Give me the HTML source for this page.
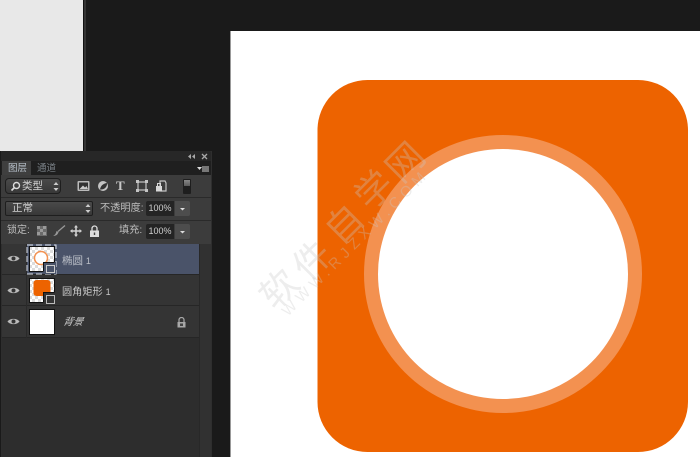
<!DOCTYPE html>
<html><head><meta charset="utf-8">
<style>
html,body{margin:0;padding:0;background:#1a1a1a}
#r{position:relative;width:700px;height:457px;overflow:hidden;background:#1a1a1a;font-family:"Liberation Sans","Noto Sans CJK SC",sans-serif}
#r div,#r svg,#r span{position:absolute}
.t{color:#c4c4c4;font-size:10px;line-height:12px;white-space:nowrap}
.box{box-sizing:border-box;border:1px solid #1e1e1e;border-radius:3px;background:linear-gradient(#4a4a4a,#383838)}
.val{background:#242424;border-radius:2px 0 0 2px;color:#d0d0d0;font-size:9px;line-height:14px;text-align:center;white-space:nowrap}
.arr{background:#4d4d4d;border-radius:0 2px 2px 0}
.wm{width:50px;height:50px;line-height:50px;text-align:center;font-size:37px;color:rgba(200,200,200,.32);transform:rotate(-45deg);font-family:"Noto Sans CJK SC",sans-serif}
</style></head><body>
<div id="r">
<div style="left:0;top:0;width:83px;height:151px;background:#e8e8e8"></div>
<div style="left:83px;top:0;width:1px;height:151px;background:#111"></div>
<div style="left:84px;top:0;width:2px;height:151px;background:#333"></div>
<div style="left:231px;top:31px;width:469px;height:426px;background:#fff;box-shadow:-1px 0 0 #999"></div>
<svg style="left:0;top:0" width="700" height="457" viewBox="0 0 700 457">
<rect x="317.500" y="80" width="370.500" height="372" rx="50" fill="#ed6300"/>
<circle cx="503" cy="274" r="139" fill="#f39150"/>
<circle cx="503" cy="274" r="125" fill="#fff"/>
</svg>
<div class="wm" style="left:252px;top:262px">软</div>
<div class="wm" style="left:285px;top:233px">件</div>
<div class="wm" style="left:317px;top:197px">自</div>
<div class="wm" style="left:347px;top:163px">学</div>
<div class="wm" style="left:378px;top:135px">网</div>
<div style="left:246px;top:234px;width:220px;height:18px;line-height:18px;text-align:center;font-size:15px;letter-spacing:5px;color:rgba(200,200,200,.32);transform:rotate(-45deg);white-space:nowrap">WWW.RJZXW.COM</div>

<div style="left:1px;top:151px;width:211px;height:306px;background:#2e2e2e"></div>
<div style="left:1px;top:151px;width:210px;height:10px;background:#272727;border-radius:2px 2px 0 0"></div>
<div style="left:1px;top:161px;width:210px;height:14px;background:#1f1f1f"></div>
<div style="left:2px;top:161px;width:29px;height:14px;background:#3f3f3f"></div>
<div class="t" style="left:8px;top:162.500px;color:#b9c2cc;font-size:9.500px">图层</div>
<div class="t" style="left:37px;top:162.500px;color:#7b8288;font-size:9.500px">通道</div>
<div style="left:1px;top:175px;width:210px;height:22px;background:#3c3c3c;border-bottom:1px solid #2a2a2a"></div>
<div style="left:1px;top:198px;width:210px;height:22px;background:#3c3c3c;border-bottom:1px solid #2a2a2a"></div>
<div style="left:1px;top:221px;width:210px;height:23px;background:#3c3c3c"></div>
<svg style="left:186px;top:153px" width="24" height="7" viewBox="0 0 24 7" fill="#a8a8a8"><path d="M2 3.500 5 1v5zM6 3.500 9 1v5z"/><path d="M16 1l5 5M21 1l-5 5" stroke="#a8a8a8" stroke-width="1.300"/></svg>
<svg style="left:196px;top:165px" width="14" height="8" viewBox="0 0 14 8"><path d="M1 2h5L3.500 5z" fill="#ddd"/><rect x="6" y="1" width="7" height="6" fill="#777"/></svg>

<div class="box" style="left:5px;top:178px;width:56px;height:16px;border-radius:4px"></div>
<svg style="left:10px;top:181px" width="12" height="11" viewBox="0 0 12 11"><circle cx="6.500" cy="4.500" r="3" fill="none" stroke="#ddd" stroke-width="1.400"/><path d="M4.500 6.500 1.500 9.500" stroke="#ddd" stroke-width="1.600"/></svg>
<div class="t" style="left:22px;top:180px;font-size:10.500px;color:#cfcfcf">类型</div>
<svg style="left:53px;top:182px" width="6" height="9" viewBox="0 0 6 9" fill="#ccc"><path d="M3 0 5.500 3H.5zM3 9 .5 6h5z"/></svg>
<svg style="left:77px;top:180px" width="13" height="12" viewBox="0 0 13 12"><rect x=".5" y="1" width="12" height="10" fill="#bbb" rx="1"/><rect x="2" y="2.500" width="9" height="7" fill="#333"/><path d="M2.500 9 6 5.500 8 7.500 9.500 6 11 9z" fill="#ccc"/></svg>
<svg style="left:97px;top:180px" width="12" height="12" viewBox="0 0 12 12"><circle cx="6" cy="6" r="5" fill="#c4c4c4"/><path d="M3 9.500C3.500 6 6 3.500 10 3 10.500 6.500 7.500 10 3 9.500z" fill="#333"/></svg>
<div style="left:116px;top:178px;font-family:'Liberation Serif',serif;font-weight:bold;font-size:13px;line-height:15px;color:#c8c8c8">T</div>
<svg style="left:136px;top:180px" width="12" height="12" viewBox="0 0 12 12"><rect x="2" y="2" width="8" height="8" fill="none" stroke="#c4c4c4" stroke-width="1.200"/><path d="M0 0h3v3H0zM9 0h3v3H9zM0 9h3v3H0zM9 9h3v3H9z" fill="#c4c4c4"/></svg>
<svg style="left:155px;top:180px" width="12" height="12" viewBox="0 0 12 12"><path d="M5 1h5l1 2v8H6V7H5z" fill="none" stroke="#c4c4c4" stroke-width="1.200"/><rect x="1" y="6" width="6" height="5.500" fill="#d8d8d8"/><path d="M2.500 6V3.500h3V6" fill="none" stroke="#d8d8d8"/></svg>
<div style="left:183px;top:179px;width:8px;height:15px;background:#1e1e1e;border-radius:1px"></div>
<div style="left:184px;top:180px;width:6px;height:6px;background:linear-gradient(#888,#5a5a5a)"></div>

<div class="box" style="left:5px;top:201px;width:88px;height:15px;border-radius:2px"></div>
<div class="t" style="left:12px;top:202px;font-size:10.500px;color:#d0d0d0">正常</div>
<svg style="left:85px;top:204px" width="6" height="9" viewBox="0 0 6 9" fill="#ccc"><path d="M3 0 5.500 3H.5zM3 9 .5 6h5z"/></svg>
<div class="t" style="left:100px;top:203px;font-size:10.200px;color:#bdbdbd">不透明度:</div>
<div class="val" style="left:146px;top:201px;width:28px;height:15px;line-height:15px">100%</div>
<div class="arr" style="left:175px;top:201px;width:15px;height:15px"></div>
<svg style="left:179px;top:207px" width="7" height="4" viewBox="0 0 7 4"><path d="M1 1h5L3.500 3.500z" fill="#ddd"/></svg>

<div class="t" style="left:7px;top:225px;font-size:10px;color:#bdbdbd">锁定:</div>
<svg style="left:37px;top:226px" width="10" height="10" viewBox="0 0 10 10"><rect width="10" height="10" fill="#6a6a6a"/><path d="M0 0h3v3H0zM6 0h3v3H6zM3 3h3v3H3zM0 6h3v3H0zM6 6h3v3H6z" fill="#999"/></svg>
<svg style="left:52px;top:225px" width="14" height="12" viewBox="0 0 14 12"><path d="M13 .5 6 6.500" stroke="#999" stroke-width="1.300"/><path d="M1 11c3 0 5-1.500 5.500-4L4.500 6C4 8.500 3 10 1 11z" fill="#999"/></svg>
<svg style="left:70px;top:225px" width="12" height="12" viewBox="0 0 12 12" fill="#d0d0d0"><path d="M6 0 8 2.500H6.800v2.700h2.700V4L12 6 9.500 8V6.800H6.800v2.700H8L6 12 4 9.500h1.200V6.800H2.500V8L0 6 2.500 4v1.200h2.700V2.500H4z"/></svg>
<svg style="left:90px;top:225px" width="9" height="12" viewBox="0 0 9 12"><path d="M2 6V3.500a2.500 2.500 0 0 1 5 0V6" fill="none" stroke="#ddd" stroke-width="1.300"/><rect x="0" y="5.500" width="9" height="6.500" fill="#ddd"/><rect x="3.800" y="7.500" width="1.400" height="2.500" fill="#444"/></svg>
<div class="t" style="left:119px;top:225px;font-size:10.200px;color:#bdbdbd">填充:</div>
<div class="val" style="left:146px;top:224px;width:28px;height:15px;line-height:15px">100%</div>
<div class="arr" style="left:175px;top:224px;width:15px;height:15px"></div>
<svg style="left:179px;top:230px" width="7" height="4" viewBox="0 0 7 4"><path d="M1 1h5L3.500 3.500z" fill="#ddd"/></svg>

<div style="left:2px;top:244px;width:197px;height:213px;background:#2d2d2d"></div>
<div style="left:199px;top:244px;width:12px;height:213px;background:#313131;border-left:1px solid #282828;box-sizing:border-box"></div>
<div style="left:2px;top:244px;width:24px;height:94px;background:#353535"></div>
<div style="left:26px;top:244px;width:173px;height:30px;background:#4a5369"></div>
<div style="left:26px;top:275px;width:173px;height:30px;background:#343434"></div>
<div style="left:26px;top:306px;width:173px;height:31px;background:#343434"></div>
<div style="left:2px;top:274px;width:197px;height:1px;background:#262626"></div>
<div style="left:2px;top:305px;width:197px;height:1px;background:#262626"></div>
<div style="left:2px;top:337px;width:197px;height:1px;background:#262626"></div>
<div style="left:26px;top:244px;width:1px;height:94px;background:#2a2a2a"></div>

<svg style="left:7px;top:254px" width="13" height="9" viewBox="0 0 13 9"><path d="M.5 4.500C3 1 10 1 12.500 4.500 10 8 3 8 .5 4.500z" fill="#bbb"/><circle cx="6.500" cy="4.500" r="2" fill="#333"/></svg>
<svg style="left:7px;top:286px" width="13" height="9" viewBox="0 0 13 9"><path d="M.5 4.500C3 1 10 1 12.500 4.500 10 8 3 8 .5 4.500z" fill="#bbb"/><circle cx="6.500" cy="4.500" r="2" fill="#333"/></svg>
<svg style="left:7px;top:317px" width="13" height="9" viewBox="0 0 13 9"><path d="M.5 4.500C3 1 10 1 12.500 4.500 10 8 3 8 .5 4.500z" fill="#bbb"/><circle cx="6.500" cy="4.500" r="2" fill="#333"/></svg>

<svg style="left:26px;top:244px" width="32" height="31" viewBox="0 0 32 31">
<defs><pattern id="c" width="6" height="6" patternUnits="userSpaceOnUse"><rect width="6" height="6" fill="#fff"/><path d="M0 0h3v3H0zM3 3h3v3H3z" fill="#ddd"/></pattern></defs>
<rect x="1" y="1" width="29" height="29" fill="none" stroke="#dfe3ea" stroke-width="1" stroke-dasharray="6 3"/>
<rect x="3.500" y="2.500" width="25" height="25" fill="url(#c)" stroke="#111" stroke-width="1"/>
<circle cx="15" cy="14" r="6.500" fill="#fff" stroke="#f39150" stroke-width="1.500"/>
<rect x="17" y="18" width="13" height="12" fill="#4a5369"/>
<path d="M17.500 27.500V18.500h11" fill="none" stroke="#111" stroke-width="1"/>
<rect x="20.500" y="21.500" width="8" height="7" fill="none" stroke="#ccc" stroke-width="1"/>
</svg>
<svg style="left:26px;top:275px" width="32" height="31" viewBox="0 0 32 31">
<rect x="3.500" y="3.500" width="25" height="24" fill="url(#c)" stroke="#111" stroke-width="1"/>
<rect x="7.500" y="5" width="17" height="16" rx="3" fill="#ed6300"/>
<rect x="17" y="17" width="13" height="13" fill="#343434"/>
<path d="M17.500 27.500V17.500h11" fill="none" stroke="#111" stroke-width="1"/>
<rect x="20.500" y="20.500" width="8" height="8" fill="none" stroke="#bbb" stroke-width="1"/>
</svg>
<div style="box-sizing:border-box;left:29px;top:309px;width:26px;height:26px;background:#fff;border:1px solid #111"></div>

<div class="t" style="left:62px;top:255px;font-size:10.500px;color:#bcc0c8">椭圆 <span style="position:static;font-size:9px">1</span></div>
<div class="t" style="left:62px;top:286px;font-size:10.200px;color:#c8c8c8">圆角矩形 <span style="position:static;font-size:9px">1</span></div>
<div class="t" style="left:63px;top:317px;font-size:10px;font-style:italic;color:#c8c8c8;transform:skewX(-12deg)">背景</div>
<svg style="left:177px;top:317px" width="9" height="11" viewBox="0 0 9 11"><path d="M2 5V3a2.500 2.500 0 0 1 5 0v2" fill="none" stroke="#a8a8a8" stroke-width="1.200"/><rect x=".5" y="5" width="8" height="5.500" fill="#a8a8a8"/><rect x="3" y="6.500" width="3" height="2.500" fill="#444"/></svg>
</div>
</body></html>
